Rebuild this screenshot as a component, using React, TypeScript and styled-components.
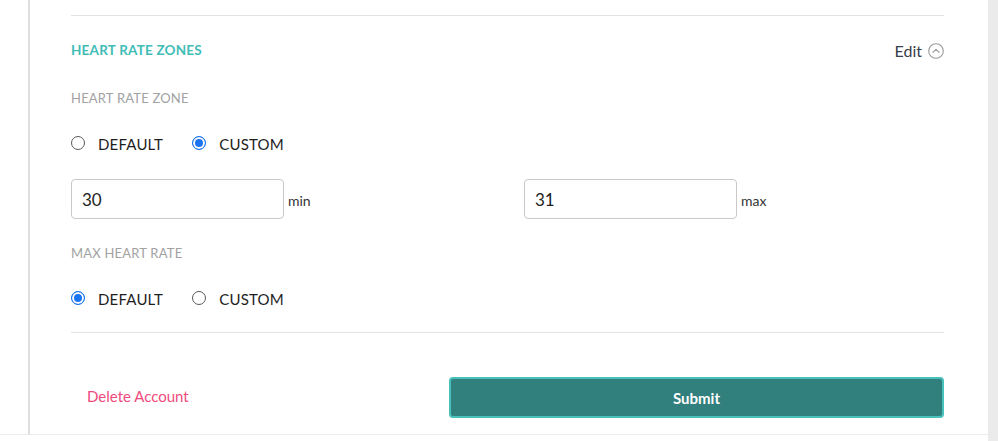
import React, { ReactElement, useState } from 'react'
import styled, { createGlobalStyle } from 'styled-components'

const GlobalStyle = createGlobalStyle`
  html, body {
    margin: 0;
    padding: 0;
    background: #fff;
    font-family: "Lato", "Open Sans", sans-serif;
  }
`

type Choice = 'default' | 'custom'

function RadioPair({ value, onChange }: { value: Choice; onChange: (v: Choice) => void }) {
  return (
    <RadioRow>
      <RadioLabel onClick={() => onChange('default')}>
        <RadioDot checked={value === 'default'} />
        DEFAULT
      </RadioLabel>
      <RadioLabel onClick={() => onChange('custom')}>
        <RadioDot checked={value === 'custom'} />
        CUSTOM
      </RadioLabel>
    </RadioRow>
  )
}

export default function App(): ReactElement {
  const [zone, setZone] = useState<Choice>('custom')
  const [maxRate, setMaxRate] = useState<Choice>('default')
  const [min, setMin] = useState('30')
  const [max, setMax] = useState('31')

  return (
    <>
      <GlobalStyle />
      <Page>
        <Gutter />
        <Main>
          <Divider />
          <SectionHeader>
            <SectionTitle>HEART RATE ZONES</SectionTitle>
            <EditLink>
              Edit
              <svg width="16" height="16" viewBox="0 0 16 16" fill="none">
                <circle cx="8" cy="8" r="7.3" stroke="#9a9a9a" strokeWidth="1.1" />
                <path d="M4.9 9.4 L8 6.4 L11.1 9.4" stroke="#9a9a9a" strokeWidth="1.1" strokeLinecap="round" strokeLinejoin="round" />
              </svg>
            </EditLink>
          </SectionHeader>

          <FieldLabel>HEART RATE ZONE</FieldLabel>
          <RadioPair value={zone} onChange={setZone} />

          <RangeGrid>
            <RangeField>
              <TextInput value={min} onChange={(e) => setMin(e.target.value)} />
              <Unit>min</Unit>
            </RangeField>
            <RangeField>
              <TextInput value={max} onChange={(e) => setMax(e.target.value)} />
              <Unit>max</Unit>
            </RangeField>
          </RangeGrid>

          <FieldLabel top={26}>MAX HEART RATE</FieldLabel>
          <RadioPair value={maxRate} onChange={setMaxRate} />

          <Divider top={24} />
          <Footer>
            <DeleteLink>Delete Account</DeleteLink>
            <SubmitButton>Submit</SubmitButton>
          </Footer>
        </Main>
        <Scrollbar />
      </Page>
    </>
  )
}

const Page = styled.div`
  display: flex;
  width: 998px;
  height: 441px;
  overflow: hidden;
`

const Gutter = styled.div`
  width: 28px;
  flex-shrink: 0;
  border-right: 2px solid #dedede;
  height: 434px;
  border-bottom: 1px solid #ececec;
`

const Main = styled.div`
  flex: 1;
  height: 434px;
  padding: 0 44px 0 41px;
  border-bottom: 1px solid #ececec;
  display: flex;
  flex-direction: column;
`

const Scrollbar = styled.div`
  width: 10px;
  flex-shrink: 0;
  background: #ebebeb;
`

const Divider = styled.div<{ top?: number }>`
  height: 1px;
  background: #e2e2e2;
  margin-top: ${(p) => p.top ?? 15}px;
`

const SectionHeader = styled.div`
  display: flex;
  justify-content: space-between;
  align-items: center;
  margin-top: 25px;
  height: 18px;
`

const SectionTitle = styled.h2`
  margin: 0;
  font-size: 13.5px;
  font-weight: 700;
  color: #3fbdb6;
  letter-spacing: 0.2px;
`

const EditLink = styled.button`
  border: none;
  background: none;
  padding: 0;
  margin-top: 1px;
  display: flex;
  align-items: center;
  gap: 6px;
  font-family: inherit;
  font-size: 16px;
  color: #36404a;
  cursor: pointer;
`

const FieldLabel = styled.div<{ top?: number }>`
  margin-top: ${(p) => p.top ?? 31}px;
  font-size: 13px;
  color: #a2a2a2;
  line-height: 16px;
  letter-spacing: 0.2px;
`

const RadioRow = styled.div`
  display: flex;
  gap: 29px;
  margin-top: 29px;
  height: 18px;
  align-items: center;
`

const RadioLabel = styled.label`
  display: flex;
  align-items: center;
  gap: 13px;
  font-size: 15px;
  color: #1e1e1e;
  cursor: pointer;
  letter-spacing: 0.2px;
`

const RadioDot = styled.span<{ checked: boolean }>`
  width: 14px;
  height: 14px;
  box-sizing: border-box;
  border-radius: 50%;
  border: 1px solid ${(p) => (p.checked ? '#1a73f0' : '#5a5a5a')};
  background: ${(p) => (p.checked ? '#1a73f0' : '#fff')};
  box-shadow: ${(p) => (p.checked ? 'inset 0 0 0 2px #fff' : 'none')};
  margin-top: -2px;
`

const RangeGrid = styled.div`
  display: grid;
  grid-template-columns: 453px 1fr;
  margin-top: 26px;
`

const RangeField = styled.div`
  display: flex;
  align-items: center;
  gap: 4px;
`

const TextInput = styled.input`
  width: 213px;
  height: 40px;
  box-sizing: border-box;
  border: 1px solid #c9c9c9;
  border-radius: 4px;
  padding: 0 10px;
  font-family: inherit;
  font-size: 17px;
  color: #1e1e1e;
  outline: none;
`

const Unit = styled.span`
  font-size: 14px;
  color: #333;
  margin-top: 2px;
`

const Footer = styled.div`
  display: grid;
  grid-template-columns: 378px 1fr;
  align-items: center;
  margin-top: 44px;
`

const DeleteLink = styled.button`
  justify-self: start;
  border: none;
  background: none;
  padding: 0 0 4px 16px;
  font-family: inherit;
  font-size: 15px;
  color: #ef4b7c;
  cursor: pointer;
`

const SubmitButton = styled.button`
  height: 41px;
  border: 2px solid #48c1bb;
  border-radius: 4px;
  background: #31807e;
  color: #fff;
  font-family: inherit;
  font-size: 15px;
  font-weight: 700;
  cursor: pointer;
`
